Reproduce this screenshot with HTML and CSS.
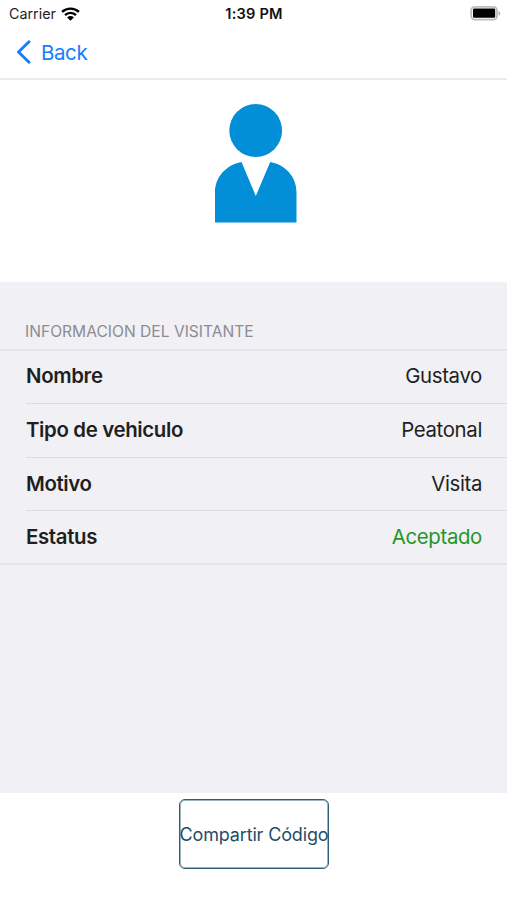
FILE: index.html
```
<!DOCTYPE html>
<html lang="es">

<head>
    <meta charset="UTF-8">
    <meta name="viewport" content="width=device-width, initial-scale=1.0">
    <title>Visitante</title>
    <link rel="stylesheet" href="styles.css">
</head>

<body>

    <header class="top">
        <div class="status-bar">
            <div class="carrier">
                <span>Carrier</span>
                <svg viewBox="0 0 18 13" width="19" height="14">
                    <path d="M1 4.6a11.6 11.6 0 0 1 16 0M3.8 7.5a7.5 7.5 0 0 1 10.4 0" fill="none" stroke="#000" stroke-width="2.3" />
                    <path d="M9 13L5.8 9.7a4.6 4.6 0 0 1 6.4 0z" />
                </svg>
            </div>
            <span class="time">1:39 PM</span>
            <svg class="battery" viewBox="0 0 31 15" width="31" height="15">
                <rect x="1.2" y="0.9" width="25.8" height="12.8" rx="3.6" fill="#fff" stroke="#bcbcbc" stroke-width="1.8" />
                <rect x="3" y="2.6" width="22.2" height="9.2" rx="1.2" />
                <path d="M28.6 5c2.2 1 2.2 3.6 0 4.6z" fill="#aaa" />
            </svg>
        </div>
        <a class="back" href="#">
            <svg viewBox="0 0 16 24" width="16" height="24">
                <path d="M13 1.8L2.5 12L13 22.2" fill="none" stroke="currentColor" stroke-width="2.9" stroke-linecap="round" stroke-linejoin="round" />
            </svg>
            <span>Back</span>
        </a>
    </header>

    <section class="photo">
        <svg viewBox="0 0 82 119" width="82" height="119">
            <circle cx="40.7" cy="26.5" r="26.4" />
            <path d="M26.5 58L40.8 92L55.2 58C71 61 81.5 73 81.5 88.5V118.5H0V88.5C0 73 11 61 26.5 58z" />
        </svg>
    </section>

    <main class="info">
        <h2>INFORMACION DEL VISITANTE</h2>
        <ul class="rows">
            <li><b>Nombre</b><span>Gustavo</span></li>
            <li><b>Tipo de vehiculo</b><span>Peatonal</span></li>
            <li><b>Motivo</b><span>Visita</span></li>
            <li><b>Estatus</b><span class="accepted">Aceptado</span></li>
        </ul>
    </main>

    <footer class="actions">
        <button type="button" class="share">Compartir Código</button>
    </footer>

</body>

</html>
```

FILE: styles.css
```
* {
    box-sizing: border-box;
}

body {
    margin: 0;
    height: 900px;
    display: flex;
    flex-direction: column;
    background: #fff;
    color: #1f1f22;
    font-family: Inter, "Liberation Sans", sans-serif;
    overflow: hidden;
}

.top {
    height: 80px;
    border-bottom: 2px solid #ececec;
}

.status-bar {
    display: grid;
    grid-template-columns: 1fr auto 1fr;
    align-items: center;
    height: 27px;
    padding: 0 6px 0 9px;
}

.carrier {
    display: flex;
    align-items: center;
    gap: 5px;
    font-size: 14.3px;
}

.time {
    margin-right: 2px;
    color: #111;
    font-size: 14.6px;
    font-weight: 600;
    letter-spacing: 0.2px;
}

.battery {
    justify-self: end;
}

.back {
    display: flex;
    align-items: center;
    gap: 9px;
    height: 50px;
    padding-left: 16px;
    color: #147efb;
    font-size: 20.5px;
    letter-spacing: -0.4px;
    text-decoration: none;
}

.photo {
    height: 202px;
    padding: 24px 0 0 215px;
    fill: #028fd8;
}

.photo svg {
    display: block;
}

.info {
    height: 511px;
    background: #f0f0f5;
}

.info h2 {
    margin: 0;
    height: 67px;
    padding: 40px 0 0 25px;
    color: #8c8c91;
    font-size: 15.6px;
    font-weight: 400;
    line-height: 20px;
}

.rows {
    margin: 0;
    padding: 0 0 0 26px;
    list-style: none;
    border-top: 2px solid #e4e4e8;
    border-bottom: 2px solid #e4e4e8;
}

.rows li {
    display: flex;
    align-items: center;
    justify-content: space-between;
    height: 53.6px;
    padding: 0 25px 1px 0;
    border-bottom: 1px solid #dcdce0;
    font-size: 20.4px;
    letter-spacing: -0.35px;
}

.rows li:first-child {
    height: 53px;
    padding-bottom: 3px;
}

.rows li:nth-child(2) {
    padding-bottom: 2px;
}

.rows li:last-child {
    height: 52px;
    border-bottom: 0;
}

.rows b {
    font-weight: 600;
}

.rows .accepted {
    color: #259529;
}

.actions {
    display: flex;
    justify-content: center;
    padding: 6px 0 0;
}

.share {
    width: 150px;
    height: 70px;
    padding: 0;
    background: #fff;
    border: 1px solid #2f5c76;
    box-shadow: inset 0 0 0 1px #9db3c0;
    border-radius: 6px;
    color: #1f4d68;
    font-family: inherit;
    font-size: 18px;
    letter-spacing: -0.15px;
    white-space: nowrap;
}
```
